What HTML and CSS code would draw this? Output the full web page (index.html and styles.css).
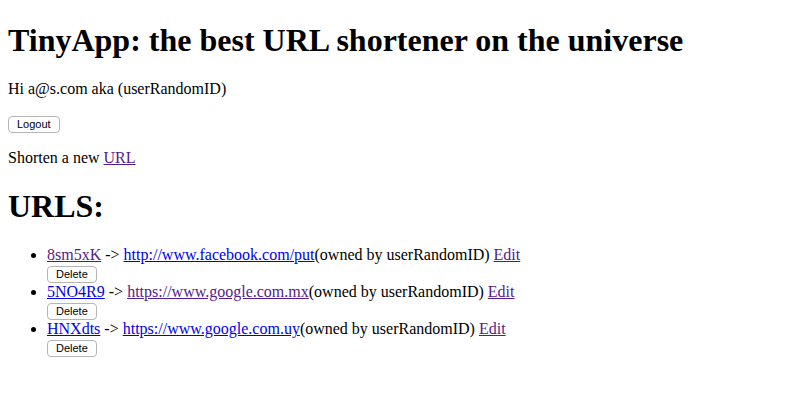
FILE: index.html
```html
<!DOCTYPE html>
<html>
<head>
<meta charset="utf-8">
<link rel="stylesheet" href="styles.css">
</head>
<body class="page">
<h1 class="title title-top">TinyApp: the best URL shortener on the universe</h1>
<p class="para">Hi a@s.com aka (userRandomID)</p>
<form class="form"><button type="button" class="btn">Logout</button></form>
<p class="para">Shorten a new <a class="link visited" href="#">URL</a></p>
<h1 class="title">URLS:</h1>
<ul class="list">
<li class="item"><a class="link visited" href="#">8sm5xK</a> -&gt; <a class="link" href="#">http://www.facebook.com/put</a>(owned by userRandomID) <a class="link visited" href="#">Edit</a>
<form class="form"><button type="button" class="btn">Delete</button></form></li>
<li class="item"><a class="link" href="#">5NO4R9</a> -&gt; <a class="link visited" href="#">https://www.google.com.mx</a>(owned by userRandomID) <a class="link visited" href="#">Edit</a>
<form class="form"><button type="button" class="btn">Delete</button></form></li>
<li class="item"><a class="link" href="#">HNXdts</a> -&gt; <a class="link" href="#">https://www.google.com.uy</a>(owned by userRandomID) <a class="link visited" href="#">Edit</a>
<form class="form"><button type="button" class="btn">Delete</button></form></li>
</ul>
</body>
</html>
```
FILE: styles.css
```css
.page {
  margin: 0 8px 8px;
  padding-top: 0;
  font-family: "Liberation Serif", "Times New Roman", serif;
  font-size: 16px;
  color: #000;
  background: #fff;
}
.title {
  font-size: 32px;
  font-weight: bold;
  margin: 21px 0;
}
.title-top {
  margin-top: 22px;
}
.para {
  margin: 16px 0;
}
.form {
  margin: 0;
}
.btn {
  font-family: "Liberation Sans", Arial, sans-serif;
  font-size: 11px;
  color: #000;
  background: #fff;
  border: 1px solid #b5b5b5;
  border-radius: 4px;
  padding: 1px 8px;
  height: 17px;
  line-height: 13px;
  margin: 0;
}
.link {
  color: #0000ee;
  text-decoration: underline;
}
.link.visited {
  color: #551a8b;
}
.list {
  margin: 16px 0;
  padding-left: 39px;
}
.item {
  line-height: 18px;
}
.item .form {
  height: 19px;
}
```
